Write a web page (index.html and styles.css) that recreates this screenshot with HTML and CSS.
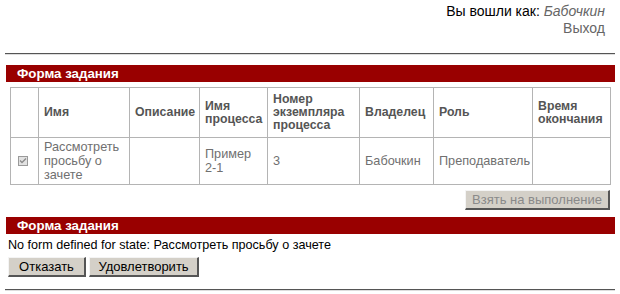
FILE: index.html
```html
<!DOCTYPE html>
<html>
<head>
<meta charset="utf-8">
<link rel="stylesheet" href="styles.css">
</head>
<body>
<div class="user">
  <div>Вы вошли как: <span class="name">Бабочкин</span></div>
  <div class="logout">Выход</div>
</div>
<div class="rule rule-top"></div>
<div class="bar">Форма задания</div>
<table class="tasks">
  <colgroup>
    <col class="c1"><col class="c2"><col class="c3"><col class="c4"><col class="c5"><col class="c6"><col class="c7"><col class="c8">
  </colgroup>
  <thead>
    <tr class="head">
      <th></th>
      <th>Имя</th>
      <th>Описание</th>
      <th>Имя<br>процесса</th>
      <th>Номер<br>экземпляра<br>процесса</th>
      <th>Владелец</th>
      <th>Роль</th>
      <th>Время<br>окончания</th>
    </tr>
  </thead>
  <tbody>
    <tr class="row">
      <td class="chk"><span class="box"><svg width="8" height="8" viewBox="0 0 8 8"><path d="M1 3.5 L3 5.5 L7 1.5" fill="none" stroke="#8a8a8a" stroke-width="1.3"/></svg></span></td>
      <td>Рассмотреть<br>просьбу о<br>зачете</td>
      <td></td>
      <td>Пример<br>2-1</td>
      <td>3</td>
      <td>Бабочкин</td>
      <td>Преподаватель</td>
      <td></td>
    </tr>
  </tbody>
</table>
<div class="actions">
  <button class="btn btn-disabled">Взять на выполнение</button>
</div>
<div class="bar bar-second">Форма задания</div>
<div class="note">No form defined for state: Рассмотреть просьбу о зачете</div>
<div class="buttons">
  <button class="btn btn-refuse">Отказать</button>
  <button class="btn btn-accept">Удовлетворить</button>
</div>
<div class="rule rule-bottom"></div>
</body>
</html>
```
FILE: styles.css
```css
html, body {
  margin: 0;
  padding: 0;
  background: #fff;
}
body {
  font-family: "Liberation Sans", Arial, sans-serif;
  color: #000;
  width: 620px;
}
.user {
  text-align: right;
  padding: 3px 15px 0 0;
  font-size: 14px;
  line-height: 17px;
  height: 50px;
}
.user .name {
  font-style: italic;
  color: #666;
}
.user .logout {
  color: #666;
}
.rule {
  margin: 0 5px;
  height: 1px;
  background: #555;
  border-bottom: 1px solid #ddd;
}
.bar {
  margin: 10px 5px 0 6px;
  height: 17px;
  background: #990000;
  color: #fff;
  font-weight: bold;
  font-size: 13.3px;
  line-height: 17px;
  padding-left: 11px;
}
.tasks {
  margin: 5px 0 0 10px;
  width: 601px;
  border-collapse: collapse;
  table-layout: fixed;
  font-size: 12.7px;
}
.c1 { width: 28px; }
.c2 { width: 91px; }
.c3 { width: 70px; }
.c4 { width: 68px; }
.c5 { width: 92px; }
.c6 { width: 74px; }
.c7 { width: 99px; }
.c8 { width: 78px; }
.tasks th, .tasks td {
  border: 1px solid #b4b4b4;
  text-align: left;
  padding: 0 3px 0 5px;
  vertical-align: middle;
  white-space: nowrap;
  overflow: hidden;
}
.tasks th {
  color: #555;
  font-weight: bold;
  font-size: 12.3px;
  line-height: 13px;
}
.tasks td {
  color: #707070;
  line-height: 14px;
}
.head {
  height: 50px;
}
.row {
  height: 47px;
}
.tasks td.chk {
  padding: 0 0 0 7px;
}
.box {
  display: flex;
  align-items: center;
  justify-content: center;
  width: 8px;
  height: 8px;
  border: 1px solid #9a9a9a;
  background: #e2e2e2;
}
.actions {
  display: flex;
  justify-content: flex-end;
  padding: 5px 10px 0 0;
}
.btn {
  font-family: "Liberation Sans", Arial, sans-serif;
  font-size: 13px;
  height: 20px;
  line-height: 16px;
  padding: 0;
  background: #d4d0c8;
  border-style: solid;
  border-width: 1px 2px 2px 1px;
  border-color: #f4f4f4 #555 #555 #f4f4f4;
  color: #000;
  margin: 0;
}
.btn-disabled {
  color: #8a8a8a;
  width: 145px;
}
.bar-second {
  margin-top: 7px;
}
.note {
  font-size: 12.6px;
  line-height: 14px;
  padding: 4px 0 0 8px;
}
.buttons {
  display: flex;
  gap: 3px;
  padding: 5px 0 0 8px;
}
.btn-refuse {
  width: 78px;
}
.btn-accept {
  width: 110px;
}
.rule-bottom {
  margin-top: 12px;
}
```
